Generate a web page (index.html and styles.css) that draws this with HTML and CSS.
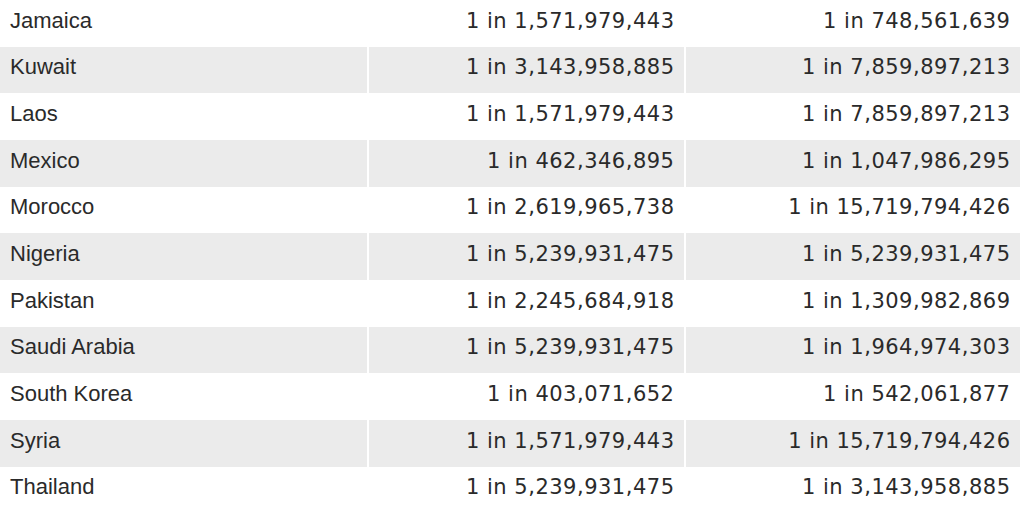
FILE: index.html
```html
<!DOCTYPE html>
<html lang="en">
<head>
<meta charset="utf-8">
<title>Odds table</title>
<link rel="stylesheet" href="styles.css">
</head>
<body>
<div class="table">
  <div class="row"><div class="cell name">Jamaica</div><div class="cell num">1 in 1,571,979,443</div><div class="cell num">1 in 748,561,639</div></div>
  <div class="row"><div class="cell name">Kuwait</div><div class="cell num">1 in 3,143,958,885</div><div class="cell num">1 in 7,859,897,213</div></div>
  <div class="row"><div class="cell name">Laos</div><div class="cell num">1 in 1,571,979,443</div><div class="cell num">1 in 7,859,897,213</div></div>
  <div class="row"><div class="cell name">Mexico</div><div class="cell num">1 in 462,346,895</div><div class="cell num">1 in 1,047,986,295</div></div>
  <div class="row"><div class="cell name">Morocco</div><div class="cell num">1 in 2,619,965,738</div><div class="cell num">1 in 15,719,794,426</div></div>
  <div class="row"><div class="cell name">Nigeria</div><div class="cell num">1 in 5,239,931,475</div><div class="cell num">1 in 5,239,931,475</div></div>
  <div class="row"><div class="cell name">Pakistan</div><div class="cell num">1 in 2,245,684,918</div><div class="cell num">1 in 1,309,982,869</div></div>
  <div class="row"><div class="cell name">Saudi Arabia</div><div class="cell num">1 in 5,239,931,475</div><div class="cell num">1 in 1,964,974,303</div></div>
  <div class="row"><div class="cell name">South Korea</div><div class="cell num">1 in 403,071,652</div><div class="cell num">1 in 542,061,877</div></div>
  <div class="row"><div class="cell name">Syria</div><div class="cell num">1 in 1,571,979,443</div><div class="cell num">1 in 15,719,794,426</div></div>
  <div class="row"><div class="cell name">Thailand</div><div class="cell num">1 in 5,239,931,475</div><div class="cell num">1 in 3,143,958,885</div></div>
</div>
</body>
</html>
```
FILE: styles.css
```css
html, body {
  margin: 0;
  padding: 0;
  background: #ffffff;
}
.table {
  display: grid;
  grid-template-columns: 367px 315px 334px;
  column-gap: 2px;
  grid-auto-rows: 46.67px;
  width: 1020px;
  color: #2a2a2a;
}
.row {
  display: contents;
}
.row:nth-child(even) .cell {
  background: #ebebeb;
}
.cell {
  display: flex;
  align-items: center;
  padding: 0 10px 5px 10px;
  line-height: 26px;
  font-size: 22px;
  white-space: nowrap;
}
.name {
  font-family: "Liberation Sans", Arial, sans-serif;
  justify-content: flex-start;
}
.num {
  font-family: "DejaVu Sans", sans-serif;
  font-size: 21px;
  letter-spacing: 0.5px;
  justify-content: flex-end;
  padding-right: 9.5px;
}
```
